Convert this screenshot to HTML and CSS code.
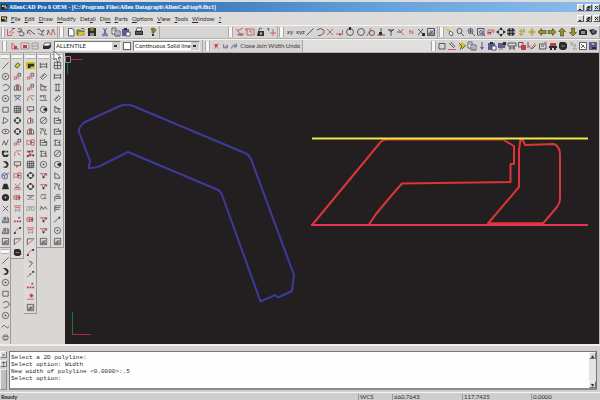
FILE: index.html
```html
<!DOCTYPE html>
<html lang="en">
<head>
<meta charset="utf-8">
<title>AllenCAD Pro 6 OEM</title>
<link rel="stylesheet" href="styles.css">
</head>
<body>
<div class="app">
  <header class="titlebar">
    <svg class="app-icon" viewBox="0 0 8 8"><path d="M0 1h7v6H0z" fill="#222"/><path d="M1 2h3v2H1z" fill="#e8c83c"/><path d="M4 5h3M5 2v2" stroke="#fff"/></svg>
    <h1 class="title">AllenCAD Pro 6 OEM - [C:\Program Files\Allen Datagraph\AllenCad\top9.fhc1]</h1>
    <div class="window-buttons" data-window></div>
  </header>

  <nav class="menubar">
    <svg class="app-icon" viewBox="0 0 8 8"><path d="M0 1h7v6H0z" fill="#222"/><path d="M1 2h3v2H1z" fill="#d6c02c"/><path d="M4 5h3M5 2v2" stroke="#fff"/></svg>
    <a href="#"><u>F</u>ile</a>
    <a href="#"><u>E</u>dit</a>
    <a href="#"><u>D</u>raw</a>
    <a href="#"><u>M</u>odify</a>
    <a href="#">Det<u>a</u>il</a>
    <a href="#">Di<u>m</u></a>
    <a href="#"><u>P</u>arts</a>
    <a href="#"><u>O</u>ptions</a>
    <a href="#"><u>V</u>iew</a>
    <a href="#"><u>T</u>ools</a>
    <a href="#"><u>W</u>indow</a>
    <a href="#"><u>?</u></a>
    <div class="window-buttons" data-window></div>
  </nav>

  <div class="toolrow toolrow-main">
    <div class="bar" data-icons="redpen spiral curve wave zigred"></div>
    <div class="bar" data-icons="new open save | cut copy paste | print | help"></div>
    <div class="spacer"></div>
    <div class="bar" data-icons="axis redbox lock snap"></div>
    <div class="bar" data-icons="xy xyz line arc cross corner circletop circle tangent perp tee ext n xdot frame"></div>
    <div class="bar" data-icons="wand zoom zoomin zoomwin undo pan zoomall ygrid ymove left right up down camera eye"></div>
  </div>

  <div class="toolrow toolrow-sub">
    <div class="bar">
      <span data-inline="redtri reddot graybox"></span>
      <span data-inline="layers"></span>
      <select class="combo" aria-label="Layer"><option>ALLENTILE</option></select>
      <input class="tick" type="checkbox" aria-label="Colour">
      <select class="combo" aria-label="Line type"><option>Continuous Solid line</option></select>
    </div>
    <div class="bar words">
      <span data-inline="redx bluehook bluearc"></span>
      <button>Close</button>
      <button>Join</button>
      <button>Width</button>
      <button>Undo</button>
    </div>
    <div class="spacer light"></div>
    <div class="bar" data-icons="sq pencil diamond copy bluepin paste truck cart redsq check hand car stop grayz graph bluebox"></div>
  </div>

  <main class="work">
    <aside class="palettes">
      <div class="column">
        <div class="palette" data-icons="line circledot arc circledot sq play ellipse zig bump hook cube wedge donut crossdark image image frame"></div>
        <div class="palette" data-icons="line hook circledot sq arc circledot wave2 face bump"></div>
      </div>
      <div class="column"><div class="palette" data-icons="erase rednode mirror bluex grid gear gear rednode redarc redboard rednode2 redaxis redlines redgrid reddots fillet chamfer stop"></div></div>
      <div class="column"><div class="palette" data-icons="yellow rednode rednode redarc redboard half mirror rednode2 redscatter grid gear gear trim trim2 redlines redgrid chamfer fillet angle rednodeline reddots redpt frame"></div></div>
      <div class="column"><div class="palette" data-icons="dimh clip note dimt radius diam leader dims dims2 circledot redv redv redv2 waves redv redv frame"></div></div>
      <div class="column"><div class="palette" data-icons="dimbox dimh dimv clip note dims dims dims2 diam radius ang leader flag flag2 nodeline circledot frame"></div></div>
    </aside>

    <svg class="drawing" viewBox="65 53 534 291" preserveAspectRatio="xMinYMin slice" role="img" aria-label="Drawing area">
      <g fill="none" stroke-width="1">
        <path d="M70 59.500h12" stroke="#b02a3a"/>
        <path d="M67.500 63v11" stroke="#1c7544"/>
        <path d="M65.500 56.500h5v6h-5z" stroke="#8a8a86"/>
        <path d="M72.500 312v23" stroke="#1c7544"/>
        <path d="M73 334.500h18" stroke="#b02a3a"/>
      </g>
      <path class="blue-shape" d="M121 105.500Q126 104 132 105.500L246 153.500Q249 155 251 159L294 275L292 291L278 297.500L275 295L260.500 301.500L222 195Q220.500 191 217 189.500L128 152L102 165Q97 168 88.500 168L90 161L79 132Q78 128 84 122.500Z"/>
      <g class="red-shape">
        <path d="M312.500 224.500L379 144Q382 139.500 387 139.500H503L514 146V164H510.500V182L402 183.500L394 192.500L376 214L369 224.500"/>
        <path d="M487.500 224L519 187V150L520.500 139.500L523 140.500L525 145L554 144Q559.500 146 560 154V199Q560 203 557 207L543 223.500H487.500"/>
      </g>
      <path d="M312 138.500h276" stroke="#eeea45" stroke-width="2"/>
      <path d="M311 225h277" stroke="#e93058" stroke-width="2"/>
      <path d="M489 223h54" stroke="#ee303b" stroke-width="1"/>
    </svg>
    <svg class="cursor" viewBox="0 0 8 12"><path d="M1 0v9l2-2 1.500 4 2-1-1.500-3.500h3z" fill="#fff" stroke="#444" stroke-width=".7"/></svg>
  </main>

  <section class="command">
    <div class="dock">
      <button class="mini" aria-label="Close panel">×</button>
      <button class="mini" aria-label="Expand panel">↑</button>
      <span class="dock-bar"></span>
    </div>
    <div class="console">
<pre class="log">Select a 2D polyline:
Select option: Width
New width of polyline &lt;0.0000&gt;:.5
Select option:</pre>
      <div class="scroll">
        <button class="mini" aria-label="Scroll up">▴</button>
        <button class="mini" aria-label="Scroll down">▾</button>
      </div>
    </div>
  </section>

  <footer class="status">
    <span>Ready</span>
    <span>WCS</span>
    <span>660.7643</span>
    <span>117.7425</span>
    <span>0.0000</span>
  </footer>
</div>
<script src="icons.js"></script>
</body>
</html>
```
FILE: styles.css
```css
* { box-sizing: border-box; }

body {
  margin: 0;
  font-family: Lato, Roboto, "Liberation Sans", Arial, sans-serif;
  font-size: 6px;
  line-height: 8px;
  color: #2c2a2a;
}

.app {
  height: 100vh;
  display: flex;
  flex-direction: column;
  overflow: hidden;
  background: #d7d5d3;
}

button { font: inherit; color: inherit; padding: 0; border: 0; background: none; }
svg { display: block; }

.titlebar {
  flex: none;
  height: 12px;
  display: flex;
  align-items: center;
  gap: 1px;
  padding: 0 0 0 1px;
  border-top: 2px solid #dcdcdc;
  background: linear-gradient(90deg, #1e61a8, #3f7fc0 35%, #68a3dc 65%, #8cbdeb);
}
.title {
  flex: 1;
  margin: 0;
  font: bold 6px/8px "Liberation Serif", "Times New Roman", serif;
  color: #fff;
  white-space: nowrap;
}
.app-icon { width: 7px; height: 8px; flex: none; }

.menubar {
  flex: none;
  height: 13px;
  display: flex;
  align-items: center;
  gap: 4px;
  padding-left: 1px;
  background: #dddcdb;
}
.menubar .app-icon { margin-right: -1px; }
.menubar a { color: inherit; text-decoration: none; }
.menubar .window-buttons { margin-left: auto; }

.window-buttons { display: flex; gap: 1px; }
.window-buttons button {
  width: 7px;
  height: 7px;
  background: #d9d7d5;
  border: 1px solid;
  border-color: #fff #555 #555 #fff;
}
.window-buttons svg { width: 5px; height: 5px; }

.toolrow {
  flex: none;
  height: 14px;
  display: grid;
  border-top: 1px solid #f4f4f4;
}
.toolrow-main { grid-template-columns: 58fr 102fr 67fr 51fr 160fr 162fr; }
.toolrow-sub { grid-template-columns: 203fr 100fr 127fr 170fr; }

.bar {
  min-width: 0;
  display: flex;
  align-items: center;
  justify-content: space-around;
  padding-right: 1px;
  border-right: 1px solid #aaa8a6;
  border-bottom: 1px solid #b3b1af;
}
.bar::before {
  content: "";
  width: 3px;
  height: 10px;
  margin: 0 1px;
  border: solid #aaa8a6;
  border-width: 0 1px;
  background: #f6f6f6;
}
.bar .gap { width: 2px; }
.bar > span[data-inline] { display: flex; }
.spacer { border-bottom: 1px solid #b3b1af; }
.spacer.light { background: #e1dfde; }
.tool { width: 10px; height: 10px; flex: none; }
.tool svg { width: 100%; height: 100%; }

.combo {
  width: 67px;
  height: 10px;
  padding: 0 0 0 1px;
  border: 1px solid;
  border-color: #777 #eee #eee #777;
  border-radius: 0;
  appearance: none;
  font: inherit;
  line-height: 8px;
  color: #222;
  background:
    linear-gradient(#333, #333) right 3px center / 3px 2px no-repeat,
    linear-gradient(#d2d0ce, #d2d0ce) right / 8px 100% no-repeat,
    #fff;
}
.tick {
  appearance: none;
  width: 8px;
  height: 8px;
  margin: 0;
  border: 1px solid #666;
  background: #fff;
}
.words { color: #3b3838; }
.words .tool { width: 9px; }

.work {
  flex: 1;
  min-height: 0;
  position: relative;
  display: flex;
  background: #d9d6d4;
  border-right: 1px solid #b8b6b4;
}
.palettes {
  flex: none;
  width: 65px;
  overflow: hidden;
  display: grid;
  grid-template-columns: 11px 13px 13px 14px 13px;
  align-items: start;
}
.palette {
  display: flex;
  flex-direction: column;
  align-items: center;
  border-right: 1px solid #9b9997;
  border-bottom: 1px solid #9b9997;
  background: #dddbd9;
}
.palette::before {
  content: "";
  width: 80%;
  height: 3px;
  margin: 1px 0;
  border: solid #b5b3b1;
  border-width: 1px 0;
  background: #f6f6f6;
}
.palette .tool { width: 9px; height: 11px; }

.drawing {
  flex: 1;
  min-width: 0;
  height: 100%;
  background: #231f20;
}
.blue-shape { fill: none; stroke: #3d3a9c; stroke-width: 2; stroke-linejoin: round; }
.red-shape { fill: none; stroke: #dd3439; stroke-width: 2; stroke-linejoin: round; }
.cursor { position: absolute; left: 53px; top: -2px; width: 8px; height: 12px; }

.command {
  flex: none;
  height: 48px;
  display: flex;
  gap: 2px;
  padding: 5px 3px 2px 0;
  border-top: 2px solid #eeedec;
  background: #d2d0cf;
}
.dock { width: 7px; display: flex; flex-direction: column; gap: 2px; }
.mini {
  width: 7px;
  height: 7px;
  display: grid;
  place-items: center;
  font-size: 6px;
  line-height: 5px;
  background: #dcdad8;
  border: 1px solid;
  border-color: #f5f5f5 #777 #777 #f5f5f5;
}
.dock-bar {
  flex: 1;
  border: 1px solid;
  border-color: #eee #888 #888 #eee;
  background: #c0bfbf;
}
.console {
  flex: 1;
  display: flex;
  background: #fefefe;
  border: 1px solid #777;
  border-bottom: 2px solid #8b8989;
}
.log {
  flex: 1;
  margin: 0;
  padding: 2px 1px;
  font: 6px/7px "Liberation Mono", "Courier New", monospace;
}
.scroll {
  width: 7px;
  display: flex;
  flex-direction: column;
  justify-content: space-between;
  background: #e6e4e3;
}

.status {
  flex: none;
  height: 8px;
  display: grid;
  grid-template-columns: 358fr 34fr 70fr 69fr 69fr;
  padding-top: 1px;
  line-height: 6px;
  background: #d0cecd;
  border-top: 1px solid #f3f3f3;
}
.status span { border-left: 1px solid #999; padding-left: 1px; }
.status span:first-child { border-color: transparent; font-weight: bold; padding: 0; }

/* icon strokes and fills */
.tool svg * { fill: none; stroke: #4c4b4e; stroke-width: .9; }
.tool svg .r { stroke: #c8525a; }
.tool svg .b { stroke: #4b4b92; }
.tool svg .g { stroke: #96948f; }
.tool svg .y { stroke: #a59a22; }
.tool svg .fk { fill: #2e2c30; stroke: none; }
.tool svg .fr { fill: #c83c48; stroke: none; }
.tool svg .fb { fill: #5a5c9c; stroke: none; }
.tool svg .fg { fill: #8f8d8a; stroke: none; }
.tool svg .fy { fill: #d9c61d; stroke: none; }
.tool svg .fw { fill: #fff; stroke: #4c4b4e; }
.tool svg .fo { fill: #999526; stroke: #3f3d1c; stroke-width: .6; }
.tool svg text { font: 6px Lato, "Liberation Sans", sans-serif; fill: #2c2a2a; stroke: none; }
.tool svg text.tr { fill: #b5303c; }
```
FILE: icons.js
```js
// p(class, path data) draws one stroke or fill of a 10x10 icon
const p = (c, d) => `<path class="${c}" d="${d}"/>`;
const c = (cls, x, y, r) => `<circle class="${cls}" cx="${x}" cy="${y}" r="${r}"/>`;
const arrow = 'M1 5L4.500 1.500V3.500H9V6.500H4.500V8.500Z';
const turn = a => `<path class="fo" d="${arrow}" transform="rotate(${a} 5 5)"/>`;
const ring = c('', 5, 5, 3.5);

const icons = {
  redpen: p('r', 'M1.500 2V8.500H6M3 6L8 1.500M5 7L8 5') + p('', 'M6 1.500H9'),
  spiral: p('', 'M2 2Q6 1 6 3L3 5Q8 4 8 7T3 8') + p('r', 'M1 4L4 6'),
  curve: p('', 'M1 7Q3 1 5 4T9 7') + p('r', 'M1 3L5 8'),
  wave: p('', 'M1 3Q3 0 4 3T8 3L6 6Q4 9 8 8') + p('r', 'M2 6L5 8'),
  zig: p('', 'M1.500 8L3.500 3L5.500 8L8 2'),
  zigred: p('r', 'M1 3L5 8L7 2L9 8') + p('', 'M1 8L3 3'),
  new: p('fw', 'M2.500 1.500H6L8 3V9H2.500Z'),
  open: p('fo', 'M1 3H4L5 4H8V8H1Z') + p('fy', 'M3 5H9L7 8H2Z') + p('', 'M5 2Q7 0 9 3'),
  save: p('fk', 'M1 1H9V9H1Z') + p('fo', 'M3 1H7V4H3Z') + p('fg', 'M3 6H7V9H3Z'),
  cut: p('b', 'M3.500 1L6 7M6.500 1L4 7') + c('b', 3.5, 8, 1) + c('b', 6.5, 8, 1),
  copy: p('fw', 'M1 1H5V7H1Z') + p('fw', 'M4 4H9V9H4Z') + p('b', 'M5 6H8M5 8H8M2 3H4'),
  paste: p('fb', 'M1 2H8V9H1Z') + p('fk', 'M3 1H6V3H3Z') + p('fw', 'M5 5H9V9H5Z'),
  print: p('fw', 'M3 1H8L7 4H2Z') + p('fk', 'M1 4H9V8H1Z') + p('g', 'M2 6H8'),
  help: p('fo', 'M3 3Q3 1 5 1T8 3Q8 4 6 5V6H4V4L5.500 3L4 3Z') + p('fk', 'M4 7H6V9H4Z'),
  axis: p('r', 'M1 2L6 7M2 7H9M2 4L8 1') + p('', 'M3 8H8'),
  redbox: p('r', 'M2 2H9V8H2ZM4 4H6V6M1 1V4'),
  lock: p('fk', 'M3 4H9V9H2Z') + p('', 'M4 4V2Q5 0 7 2') + p('fw', 'M5 5H7V8H5Z'),
  snap: p('r', 'M4 6H10M7 2V9') + p('', 'M1 2Q3 0 3 3L2 4'),
  xy: '<text x="2" y="7">xy</text>',
  xyz: '<text x="1" y="7">xyz</text>',
  line: p('', 'M1.500 8.500L8.500 1.500'),
  arc: p('', 'M2 3Q6 0 8.500 3T5 8.500L3 8.500'),
  cross: p('r', 'M2 2L8 8M8 2L2 8'),
  crossdark: p('', 'M2 2L8 8M8 2L2 8'),
  corner: p('r', 'M1 7H8M7.500 3V8') + p('', 'M5 6V9'),
  circletop: ring + p('fk', 'M4 0H6V3H4Z'),
  circle: ring,
  circledot: ring + p('fk', 'M4.200 4.200H5.800V5.800H4.200Z'),
  tangent: c('', 6, 6, 2.5) + p('r', 'M1 9L5 1'),
  perp: p('', 'M5 1V7M2 8H9') + p('fk', 'M3 5H6V8H3Z') + p('r', 'M1 8H5'),
  tee: p('', 'M2 3H8M5 3V9M3 2L5 5L8 2'),
  ext: p('r', 'M2 2L8 8M7 2L4 6') + p('', 'M1 5H4'),
  n: '<text class="tr" x="3" y="7">N</text>',
  xdot: p('', 'M2 2L7 7M7 2L2 8') + p('fk', 'M6 6H9V9H6Z'),
  frame: p('', 'M1.500 1.500H8.500V8.500H1.500Z') + p('fg', 'M2 6L5 3L8 6V8H2Z') + p('b', 'M3 8L8 3'),
  wand: p('fy', 'M1 1L5 3L3 5Z') + p('fw', 'M5 4L8 6L7 9L4 7Z'),
  zoom: c('', 4.5, 4, 2.5) + p('', 'M6 6L9 9'),
  zoomin: c('b', 4.5, 4, 2.5) + p('', 'M6 6L9 9M4.500 2V6M3 4H6'),
  zoomwin: p('', 'M1.500 1.500H8V8H1.500Z') + c('b', 5, 5, 1.5) + p('', 'M6 6L9 9'),
  undo: p('r', 'M2 8V3H8V5H4') + p('fr', 'M1 5H5V8Z'),
  pan: p('fk', 'M5 0L7 3H3ZM5 10L7 7H3ZM0 5L3 3V7ZM10 5L7 3V7Z'),
  zoomall: c('fk', 5, 5, 4) + p('fg', 'M4 1H6V3H4ZM4 7H6V9H4ZM1 4H3V6H1ZM7 4H9V6H7Z') + p('fw', 'M4 4H6V6H4Z'),
  ygrid: p('y', 'M2 4H8M2 7H6M4 2V9M7 1V6'),
  ymove: p('y', 'M1 5H9M5 1V9M3 3L7 7M7 3L3 7'),
  left: turn(0), up: turn(90), right: turn(180), down: turn(270),
  camera: p('fk', 'M1 3H3V2H7V3H9V8H1Z') + p('fg', 'M3 4H7V7H3Z'),
  eye: p('fk', 'M1 3L5 2L9 4L8 7L4 8Z') + p('fb', 'M4 3H7V6H4Z'),
  redtri: p('r', 'M2 8V2L7 7M2 8H9') + p('fr', 'M4 5H7V8H4Z'),
  reddot: p('g', 'M1 2H9V8H1Z') + p('fr', 'M3 4H7V7H3Z'),
  graybox: p('g', 'M2 2H8V8H2ZM2 5H8'),
  layers: p('fw', 'M3 2H9L7 5H1Z') + p('fk', 'M1 5H7L9 3V6L7 8H1Z'),
  redx: p('r', 'M3 3L7 8M7 2L3 8') + p('fr', 'M3 3H6V6H3Z'),
  bluehook: p('b', 'M3 3V7H7V4L5 6'),
  bluearc: p('b', 'M2 8Q2 2 7 5M7 2V6H4'),
  sq: p('', 'M2 2.500H8V8H2Z'),
  pencil: p('', 'M2 2L7 7M4 1L8 6') + p('r', 'M1 8.500H9'),
  diamond: p('fy', 'M5 1L9 4L5 8L1 5Z') + p('b', 'M2 2L5 5L3 9') + p('', 'M5 8L9 4'),
  bluepin: p('b', 'M5 1V6') + p('fb', 'M3 6H7L5 9Z'),
  truck: p('fb', 'M1 2H8V7H1Z') + p('r', 'M5 5H9M2 8H6') + p('fk', 'M6 1H9V4H6Z'),
  cart: p('', 'M1 2H9V5H1ZM2 7H8M3 5V9M7 5V9'),
  redsq: p('', 'M1.500 1.500H6V6H1.500Z') + p('fr', 'M4 4H9V9H4Z'),
  check: p('r', 'M2 4L4 8L8 2') + p('', 'M1 1V7M5 8L9 4'),
  hand: p('', 'M1.500 3H8V8H1.500ZM3 5H6') + p('r', 'M6 2L9 1'),
  car: p('fr', 'M2 2H8V5H2Z') + p('fk', 'M1 5H9V7H1ZM2 7H4V9H2ZM6 7H8V9H6Z'),
  stop: p('fk', 'M2 1H7L9 3V7L7 9H3L1 7V3Z') + p('g', 'M3 5H7'),
  grayz: p('g', 'M2 2H5L3 5M5 4H8L5 8H9'),
  graph: p('fw', 'M1.500 1.500H8.500V8.500H1.500Z') + p('', 'M3 3L7 7M3 7L6 4'),
  bluebox: p('fb', 'M1 1H9V9H1Z') + p('fw', 'M3 2H7V4H3Z') + p('fk', 'M4 6H8V8H4Z'),
  play: p('', 'M3 1.500Q3 5 2 8.500Q6 7 8 5Q6 3 3 1.500'),
  ellipse: '<ellipse cx="5" cy="5" rx="4" ry="2.500"/>' + c('', 5, 5, .7),
  bump: p('fk', 'M1 6V2H5V4H3V6ZM1 6L3 9H7L9 6H6L5 7L3 6ZM6 2H8V4H6Z'),
  hook: p('fk', 'M2 1L6 1.500Q11 5 6 9L2 8L6 6.500Q7 5 5 3.500Z'),
  cube: p('b', 'M1 4L4 2L7 4V8L4 9L1 7ZM4 5V8M1 4L4 5L9 2'),
  wedge: p('fk', 'M3 2H7L9 8H1Z'),
  donut: c('fk', 5, 5, 4) + c('fw', 5, 5, 1),
  image: p('', 'M1.500 6V8.500H8.500V3') + p('b', 'M2 3H4V5H2M5 2V6M7 2V6') + p('fg', 'M2 6H8V8H2Z'),
  wave2: p('', 'M1 6Q3 2 5 5T9 5'),
  face: c('', 5, 5, 3) + p('', 'M3 4H5M5 4H7M4 7H6'),
  erase: p('fy', 'M2 6L5 2L8 4L5 8Z') + p('', 'M2 6L5 2L8 4L5 8Z'),
  yellow: p('fy', 'M0 1H10V9H0Z') + p('fk', 'M2 3H9V6H5V8H2Z'),
  rednode: p('r', 'M4 4L7 8M1.500 5.500H4V8H1.500Z') + p('', 'M5.500 1.500H8.500V4.500H5.500Z'),
  mirror: p('', 'M4 2L1.500 4V8H4ZM6 2L8.500 4V8H6Z') + p('r', 'M5 1V9'),
  bluex: p('b', 'M2 3L8 7M8 3L2 7') + p('', 'M1 2H9'),
  grid: p('', 'M1.500 1.500H8.500V8.500H1.500ZM4 1V9M6.500 1V9M1 4H9M1 6.500H9'),
  gear: c('', 5, 5, 3) + p('fk', 'M4 1H6V3H4ZM4 7H6V9H4ZM1 4H3V6H1ZM7 4H9V6H7Z'),
  redarc: p('r', 'M2 8Q1 2 6 2') + p('', 'M5 4L8 7') + p('r', 'M6 2H9'),
  redboard: p('', 'M1.500 2H8.500V6H1.500Z') + p('r', 'M4 9V6L6 8'),
  rednode2: p('r', 'M1 2V8M2 3H5V7H2M6 2H9V8H6Z') + p('', 'M5 5H8'),
  redaxis: p('r', 'M2 2L5 5L8 1M1 8H9') + p('b', 'M2 6H8'),
  redlines: p('r', 'M1 3H6V7H1ZM2 5H9M4 2V8') + p('', 'M7 2V8'),
  redgrid: p('r', 'M1 2H9M2 4H8') + p('g', 'M2 7H8M3 5V9M7 4V9'),
  reddots: p('fr', 'M1 6H3V8H1ZM4 6H6V8H4ZM7 6H9V8H7Z') + p('fb', 'M6 2H8V4H6Z'),
  fillet: p('r', 'M2 9Q2 4 8 2') + p('fk', 'M7 1H9V3H7ZM1 7H3V9H1Z'),
  chamfer: p('', 'M1.500 9V2H9') + p('r', 'M2 8L8 3'),
  half: p('fw', 'M2 4L5 2V8H2Z') + p('fr', 'M5 2H6V8H5Z') + p('', 'M7.500 3V8'),
  redscatter: p('fr', 'M1 2H3V4H1ZM6 1H8V4H6ZM3 5H6V8H3Z') + p('fk', 'M3 2H5V4H3ZM7 6H9V8H7ZM1 7H3V9H1Z'),
  trim: p('', 'M1 3H9M3 6L7 4') + p('g', 'M1 7H9'),
  trim2: p('g', 'M1 3H9V7H6V4H4V7H1Z'),
  angle: p('', 'M3 2L7 5L3 9') + p('r', 'M5 2L8 5'),
  nodeline: p('', 'M1 8L6 4') + p('fk', 'M6 2H8V4H6Z'),
  rednodeline: p('r', 'M1 8L5 5') + p('fk', 'M7 1H9V3H7ZM4 4H6V5H4Z'),
  redpt: p('r', 'M1 8H9') + p('fr', 'M5 2H7V6H5ZM4 3H8V5H4Z'),
  dimh: p('', 'M1.500 2V8M8.500 2V8M1 3.500H9M1 6.500H9'),
  dimv: p('', 'M2 1.500H8M2 8.500H8M3.500 1V9M6.500 1V9'),
  dimbox: p('', 'M1.500 1.500H8.500V8.500H1.500ZM5 1V9M1 5H9'),
  dimt: p('', 'M1 2H8M2 4V2M5 4V2M1 7H9M7 3V6'),
  clip: p('', 'M1.500 6L6 1.500L8.500 4L4 8.500ZM3 6L6 3'),
  note: p('', 'M2 1V8H5L8 4H4Z') + p('', 'M4 2L6 5M6 8H9'),
  radius: ring + p('fk', 'M5 4L9 3V7L5 6Z'),
  diam: ring + p('', 'M2 8L8 2'),
  leader: p('', 'M1 2H5L2 5V8M5 3L7 8M6 8H9M7 2V5'),
  dims: p('', 'M1.500 2V8M1 2.500H5M3 5H9M1 8H9M6 1V4H9M8.500 5V8'),
  dims2: p('', 'M1 8H9M2.500 2V8M1 2.500H6M5 5H8M7.500 2V8'),
  redv: p('r', 'M1 3H9M3 3L5 7L7 3') + p('fk', 'M4 6H6V8H4Z') + p('fb', 'M7 3H9V5H7Z'),
  redv2: p('r', 'M1 3L4 7L8 3') + p('', 'M2 2H8M5 6H8'),
  waves: p('', 'M1 7L3 3L5 6L7 3L9 6') + p('r', 'M1 3H3'),
  ang: p('', 'M2 2V8H8Q7 4 2 2'),
  flag: p('', 'M2 9V4H8V6H3M3 2H8'),
  flag2: p('', 'M2 9V2H9M2 4H8M2 6H7'),
};

const tool = name => `<button class="tool" aria-label="${name}"><svg viewBox="0 0 10 10">${icons[name]}</svg></button>`;
const fill = (el, list) => {
  el.innerHTML = list.split(' ').map(n => n === '|' ? '<span class="gap"></span>' : tool(n)).join('');
};

document.querySelectorAll('[data-icons]').forEach(el => fill(el, el.dataset.icons));
document.querySelectorAll('[data-inline]').forEach(el => fill(el, el.dataset.inline));

const marks = { Minimise: 'M1 4.500H3', Restore: 'M2 1.500H4V3.500M1 2.500H3V4.500H1Z', Close: 'M1 1L4 4M4 1L1 4' };
document.querySelectorAll('[data-window]').forEach(el => {
  el.innerHTML = Object.entries(marks).map(([label, d]) =>
    `<button aria-label="${label}"><svg viewBox="0 0 5 5"><path d="${d}" fill="none" stroke="#222"/></svg></button>`).join('');
});
```
